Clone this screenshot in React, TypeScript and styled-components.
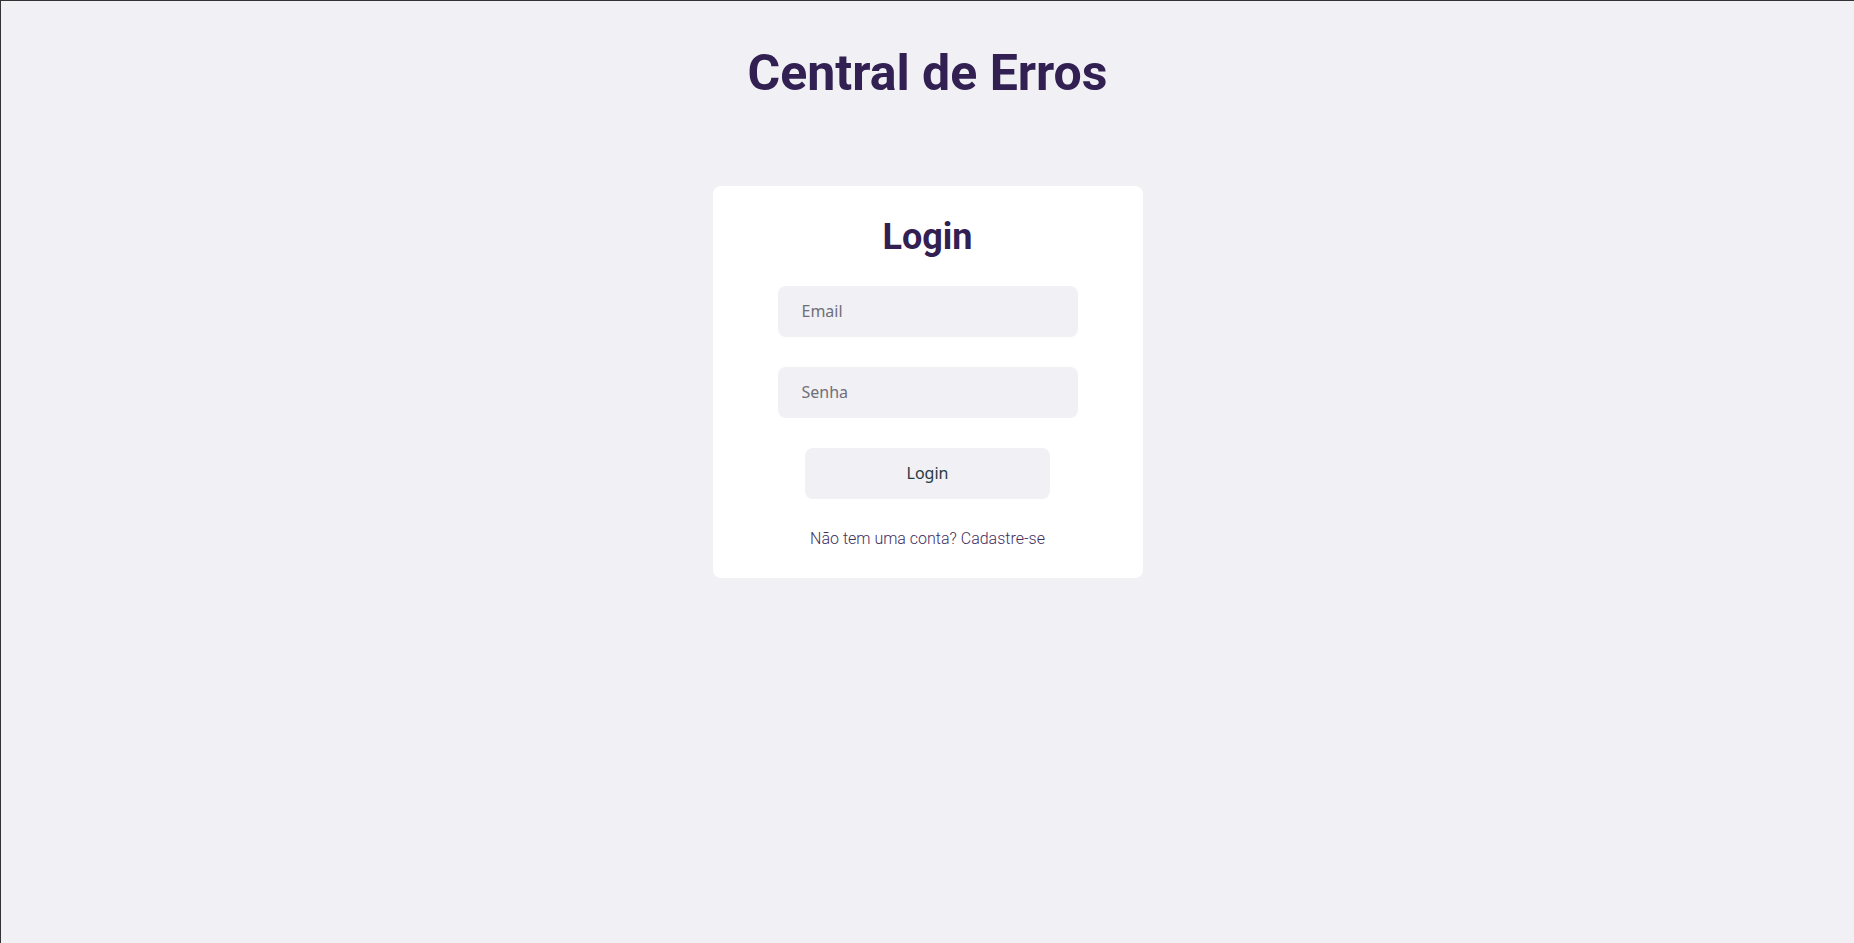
import styled, { createGlobalStyle } from 'styled-components';

const GlobalStyle = createGlobalStyle`
  * {
    box-sizing: border-box;
  }
  html, body {
    margin: 0;
    padding: 0;
    background: #f0f0f5;
  }
  body {
    min-height: 100vh;
    border-top: 1px solid #333;
    border-left: 1px solid #333;
    font-family: Roboto, 'Liberation Sans', sans-serif;
  }
`;

const Page = styled.main`
  display: flex;
  flex-direction: column;
  align-items: center;
`;

const Title = styled.h1`
  margin: 43px 0 84px;
  font-family: Roboto, sans-serif;
  font-size: 50px;
  font-weight: 700;
  color: #312051;
`;

const Card = styled.section`
  width: 430px;
  padding: 30px 0 30px;
  background: #fff;
  border-radius: 8px;
  display: flex;
  flex-direction: column;
  align-items: center;
`;

const CardTitle = styled.h2`
  margin: 0 0 28px;
  font-family: Roboto, sans-serif;
  font-size: 36px;
  font-weight: 700;
  color: #312051;
`;

const Form = styled.form`
  display: flex;
  flex-direction: column;
  align-items: center;
  gap: 30px;
`;

const Input = styled.input`
  width: 300px;
  height: 51px;
  padding: 0 24px 2px;
  border: 0;
  border-radius: 8px;
  background: #f0f0f5;
  font-family: 'Noto Sans', sans-serif;
  font-size: 16px;
  color: #333;
  outline: none;

  &::placeholder {
    color: #6f6f7a;
  }
`;

const Button = styled.button`
  width: 245px;
  height: 51px;
  padding: 0 0 2px;
  border: 0;
  border-radius: 8px;
  background: #f0f0f5;
  font-family: 'Noto Sans', sans-serif;
  font-size: 16px;
  color: #263a42;
  cursor: pointer;
`;

const SignUp = styled.a`
  margin-top: 30px;
  font-family: Roboto, sans-serif;
  font-size: 16px;
  font-weight: 300;
  color: #3f2e5f;
  text-decoration: none;
  cursor: pointer;
`;

const App = () => {
  return (
    <>
      <GlobalStyle />
      <Page>
        <Title>Central de Erros</Title>
        <Card>
          <CardTitle>Login</CardTitle>
          <Form onSubmit={(e) => e.preventDefault()}>
            <Input type='email' placeholder='Email' />
            <Input type='password' placeholder='Senha' />
            <Button type='submit'>Login</Button>
          </Form>
          <SignUp>Não tem uma conta? Cadastre-se</SignUp>
        </Card>
      </Page>
    </>
  );
};

export default App;
